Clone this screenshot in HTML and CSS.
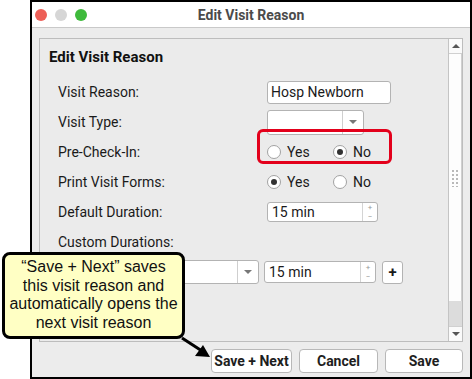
FILE: index.html
```html
<!DOCTYPE html>
<html lang="en">
<head>
  <meta charset="UTF-8" />
  <title>Edit Visit Reason</title>
  <link rel="stylesheet" href="styles.css">
</head>
<body>
  <div class="window">
    <div class="titlebar">
      <div class="lights">
        <span class="light red"></span>
        <span class="light gray"></span>
        <span class="light green"></span>
      </div>
      <div class="title">Edit Visit Reason</div>
    </div>

    <div class="window-body">
      <div class="panel">
        <div class="panel-content">
          <h3>Edit Visit Reason</h3>
          <div class="form">
            <label>Visit Reason:</label>
            <div class="field"><div class="textbox">Hosp Newborn</div></div>

            <label>Visit Type:</label>
            <div class="field">
              <div class="combo"><span class="combo-text"></span><span class="combo-btn"><i class="caret"></i></span></div>
            </div>

            <label>Pre-Check-In:</label>
            <div class="field">
              <div class="radios highlight">
                <span class="radio-opt"><span class="radio"></span>Yes</span>
                <span class="radio-opt"><span class="radio on"></span>No</span>
              </div>
            </div>

            <label>Print Visit Forms:</label>
            <div class="field">
              <div class="radios">
                <span class="radio-opt"><span class="radio on"></span>Yes</span>
                <span class="radio-opt"><span class="radio"></span>No</span>
              </div>
            </div>

            <label>Default Duration:</label>
            <div class="field">
              <div class="spinner"><span class="spin-text">15 min</span><span class="spin-btns"><i>+</i><i>&minus;</i></span></div>
            </div>

            <label class="wide">Custom Durations:</label>
            <div class="custom-row">
              <div class="combo custom-combo"><span class="combo-text"></span><span class="combo-btn"><i class="caret"></i></span></div>
              <div class="spinner small"><span class="spin-text">15 min</span><span class="spin-btns"><i>+</i><i>&minus;</i></span></div>
              <div class="add-btn">+</div>
            </div>
          </div>
        </div>
        <div class="scrollbar">
          <div class="sb-arrow up"></div>
          <div class="sb-thumb"><div class="grip"></div></div>
          <div class="sb-track"></div>
          <div class="sb-arrow down"></div>
        </div>
      </div>

      <div class="buttons">
        <div class="button">Save + Next</div>
        <div class="button">Cancel</div>
        <div class="button">Save</div>
      </div>
    </div>
  </div>

  <div class="callout">&ldquo;Save + Next&rdquo; saves<br>this visit reason and<br>automatically opens the<br>next visit reason</div>
  <svg class="pointer" width="40" height="30" viewBox="0 0 40 30">
    <line x1="2" y1="2" x2="22" y2="15" stroke="#000" stroke-width="3" />
    <polygon points="30,21 15,20 23,9" fill="#000" />
  </svg>
</body>
</html>
```

FILE: styles.css
```css
body {
  margin: 0;
  background: #fff;
  font-family: Roboto, "Liberation Sans", sans-serif;
  color: #1a1a1a;
  position: relative;
}

.window {
  margin-left: 30px;
  width: 442px;
  height: 379px;
  border: 2px solid #000;
  box-sizing: border-box;
  display: flex;
  flex-direction: column;
}

.titlebar {
  height: 25px;
  background: #fff;
  border-bottom: 1px solid #c9c9c9;
  display: flex;
  align-items: center;
  position: relative;
}

.lights {
  display: flex;
  gap: 8px;
  padding-left: 3px;
}

.light {
  width: 12px;
  height: 12px;
  border-radius: 50%;
}

.light.red { background: #ed5f57; }
.light.gray { background: #d6d6d6; }
.light.green { background: #3fba3c; }

.title {
  position: absolute;
  left: 0;
  right: 0;
  text-align: center;
  font-weight: bold;
  font-size: 14px;
  color: #4b4b4b;
}

.window-body {
  flex: 1;
  background: #ececec;
  padding: 10px 7px 0 7px;
  display: flex;
  flex-direction: column;
}

.panel {
  height: 304px;
  box-sizing: border-box;
  border: 1px solid #bdbdbd;
  background: #ebebeb;
  display: flex;
}

.panel-content {
  flex: 1;
  padding: 10px 0 0 9px;
}

.panel-content h3 {
  margin: 0;
  font-size: 15px;
  line-height: 16px;
  font-weight: bold;
  color: #111;
}

.form {
  display: grid;
  grid-template-columns: 209px auto;
  grid-auto-rows: 30px;
  align-items: center;
  margin-top: 12px;
  padding-left: 9px;
  font-size: 14px;
}

.form label.wide {
  grid-column: 1 / 3;
}

.field {
  display: flex;
  align-items: center;
}

.textbox {
  width: 124px;
  height: 23px;
  box-sizing: border-box;
  background: #fff;
  border: 1px solid #b3b3b3;
  border-radius: 3px;
  padding-left: 3px;
  font-size: 14px;
  line-height: 21px;
}

.combo {
  width: 97px;
  height: 25px;
  box-sizing: border-box;
  background: #fff;
  border: 1px solid #b3b3b3;
  border-radius: 3px;
  display: flex;
}

.combo-text { flex: 1; }

.combo-btn {
  width: 20px;
  border-left: 1px solid #cfcfcf;
  display: flex;
  align-items: center;
  justify-content: center;
}

.caret {
  width: 0;
  height: 0;
  border-left: 4px solid transparent;
  border-right: 4px solid transparent;
  border-top: 4px solid #777;
}

.radios {
  display: flex;
  align-items: center;
  font-size: 14px;
  position: relative;
}

.radio-opt {
  display: flex;
  align-items: center;
  gap: 6px;
  width: 66px;
}

.radio {
  width: 14px;
  height: 14px;
  box-sizing: border-box;
  border: 1px solid #a2a2a2;
  border-radius: 50%;
  background: #fff;
  display: flex;
  align-items: center;
  justify-content: center;
}

.radio.on::after {
  content: "";
  width: 6px;
  height: 6px;
  border-radius: 50%;
  background: #333;
}

.highlight::after {
  content: "";
  position: absolute;
  left: -10px;
  top: -15px;
  width: 129px;
  height: 29px;
  border: 3px solid #e3001b;
  border-radius: 6px;
}

.spinner {
  width: 111px;
  height: 20px;
  box-sizing: border-box;
  background: #fff;
  border: 1px solid #b3b3b3;
  border-radius: 3px;
  display: flex;
  font-size: 14px;
}

.spin-text {
  flex: 1;
  padding-left: 4px;
  line-height: 18px;
}

.spin-btns {
  width: 14px;
  border-left: 1px solid #d4d4d4;
  display: flex;
  flex-direction: column;
  align-items: center;
  font-style: normal;
  font-size: 8px;
  line-height: 9px;
  color: #999;
}

.spin-btns i { font-style: normal; }

.custom-row {
  grid-column: 1 / 3;
  display: flex;
  align-items: center;
  gap: 5px;
}

.custom-combo {
  width: 201px;
  height: 24px;
}

.spinner.small {
  width: 112px;
  height: 22px;
}

.spinner.small .spin-text { line-height: 20px; }
.spinner.small .spin-btns { justify-content: center; }

.add-btn {
  width: 21px;
  height: 23px;
  box-sizing: border-box;
  background: #fff;
  border: 1px solid #b3b3b3;
  border-radius: 3px;
  text-align: center;
  font-weight: bold;
  font-size: 15px;
  line-height: 20px;
  margin-left: 1px;
}

.scrollbar {
  width: 13px;
  border-left: 1px solid #c4c4c4;
  display: flex;
  flex-direction: column;
  background: #fff;
}

.sb-arrow {
  height: 14px;
  display: flex;
  align-items: center;
  justify-content: center;
  background: #fafafa;
}

.sb-arrow.up { border-bottom: 1px solid #d0d0d0; }
.sb-arrow.down { border-top: 1px solid #d0d0d0; }

.sb-arrow.up::after {
  content: "";
  border-left: 4px solid transparent;
  border-right: 4px solid transparent;
  border-bottom: 4px solid #555;
}

.sb-arrow.down::after {
  content: "";
  border-left: 4px solid transparent;
  border-right: 4px solid transparent;
  border-top: 4px solid #555;
}

.sb-thumb {
  height: 247px;
  background: #fdfdfd;
  border-right: 1px solid #d0d0d0;
  display: flex;
  align-items: center;
  justify-content: center;
}

.grip {
  width: 9px;
  height: 18px;
  background-image: radial-gradient(#b9b9b9 1px, transparent 1.3px);
  background-size: 4px 4px;
}

.sb-track {
  flex: 1;
  background: #dcdcdc;
}

.buttons {
  display: flex;
  justify-content: flex-end;
  gap: 7px;
  margin-top: 7px;
}

.button {
  height: 24px;
  box-sizing: border-box;
  background: #fff;
  border: 1px solid #b8b8b8;
  border-radius: 4px;
  font-weight: bold;
  font-size: 14px;
  line-height: 22px;
  text-align: center;
  color: #1e1e1e;
}

.button:nth-child(1) { width: 81px; }
.button:nth-child(2) { width: 79px; }
.button:nth-child(3) { width: 78px; }

.callout {
  position: absolute;
  left: 2px;
  top: 252px;
  width: 183px;
  height: 87px;
  box-sizing: border-box;
  border: 3px solid #000;
  border-radius: 8px;
  background: #ffffc4;
  font-family: "Liberation Sans", Arial, sans-serif;
  font-size: 16px;
  line-height: 18.7px;
  text-align: center;
  padding: 3px 0 0;
  color: #111;
  white-space: nowrap;
}

.pointer {
  position: absolute;
  left: 180px;
  top: 336px;
}
```
